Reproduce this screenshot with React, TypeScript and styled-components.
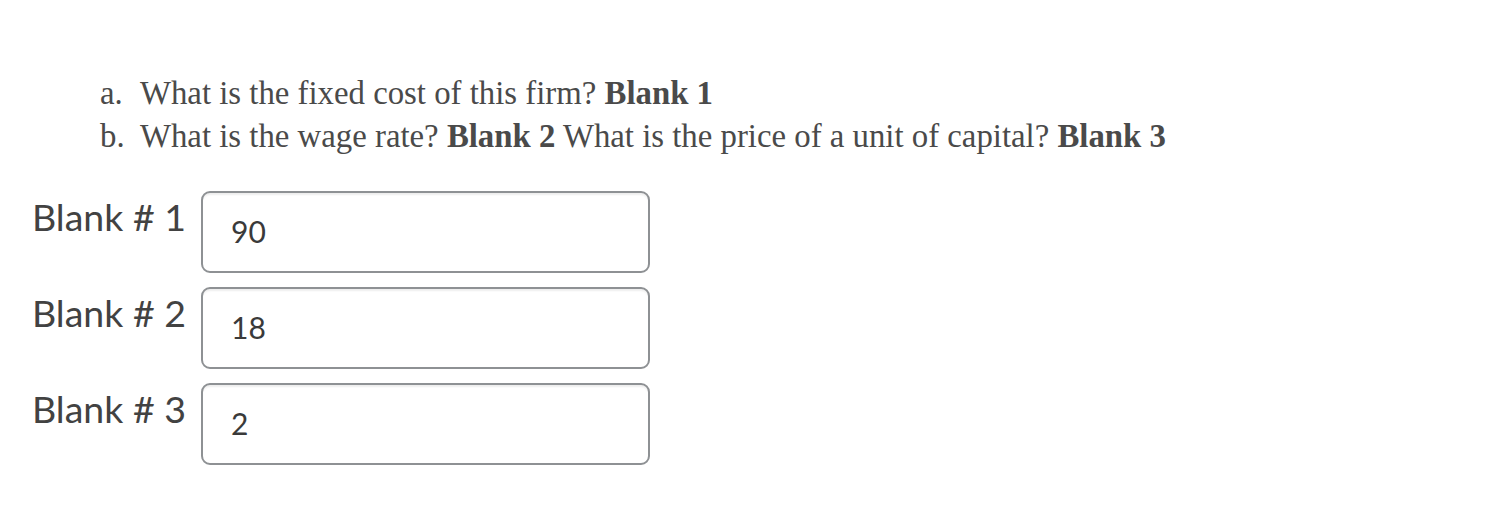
import React from 'react'
import styled, { createGlobalStyle } from 'styled-components'

const GlobalStyle = createGlobalStyle`
  body {
    margin: 0;
    background: #ffffff;
  }
`

const Page = styled.div`
  padding: 72px 0 0 32px;
  width: 1490px;
  height: 508px;
  box-sizing: border-box;
`

const QuestionList = styled.ol`
  list-style: none;
  margin: 0 0 33px 0;
  padding-left: 68px;
  font-family: 'Liberation Serif', 'Times New Roman', serif;
  font-size: 32.8px;
  line-height: 43px;
  color: #4a4a4a;
`

const Question = styled.li`
  white-space: nowrap;
`

const Marker = styled.span`
  display: inline-block;
  width: 40px;
`

const Strong = styled.strong`
  font-weight: 700;
`

const BlankList = styled.div`
  display: flex;
  flex-direction: column;
  gap: 14px;
`

const BlankRow = styled.label`
  display: flex;
  align-items: flex-start;
`

const BlankLabel = styled.span`
  width: 169px;
  flex: none;
  font-family: Lato, 'Noto Sans', sans-serif;
  font-size: 37.5px;
  line-height: 37px;
  padding-top: 7px;
  color: #424242;
  white-space: nowrap;
`

const BlankInput = styled.div`
  width: 449px;
  height: 82px;
  box-sizing: border-box;
  border: 2px solid #8e9194;
  border-radius: 9px;
  box-shadow: inset 0 3px 2px -1px rgba(0, 0, 0, 0.07);
  padding: 23px 28px 0;
  font-family: Lato, 'Noto Sans', sans-serif;
  font-size: 30px;
  line-height: 30px;
  color: #3a3a3a;
`

const questions = [
  {
    marker: 'a.',
    body: (
      <>
        What is the fixed cost of this firm? <Strong>Blank 1</Strong>
      </>
    ),
  },
  {
    marker: 'b.',
    body: (
      <>
        What is the wage rate? <Strong>Blank 2</Strong> What is the price of a unit of capital?{' '}
        <Strong>Blank 3</Strong>
      </>
    ),
  },
]

const blanks = [
  { n: 1, value: '90' },
  { n: 2, value: '18' },
  { n: 3, value: '2' },
]

export default function App() {
  return (
    <>
      <GlobalStyle />
      <Page>
        <QuestionList>
          {questions.map((q) => (
            <Question key={q.marker}>
              <Marker>{q.marker}</Marker>
              {q.body}
            </Question>
          ))}
        </QuestionList>
        <BlankList>
          {blanks.map((b) => (
            <BlankRow key={b.n}>
              <BlankLabel>Blank # {b.n}</BlankLabel>
              <BlankInput>{b.value}</BlankInput>
            </BlankRow>
          ))}
        </BlankList>
      </Page>
    </>
  )
}
